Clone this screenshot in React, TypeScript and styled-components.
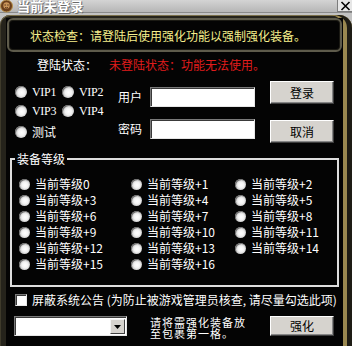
import React from "react";
import styled, { createGlobalStyle } from "styled-components";

const CJK = `"Noto Sans CJK SC", "Noto Sans", sans-serif`;

const Global = createGlobalStyle`
  html, body { margin: 0; padding: 0; background: #000; }
  body { width: 352px; height: 346px; overflow: hidden; }
  * { box-sizing: border-box; }
`;

const Window = styled.div`
  width: 352px;
  height: 346px;
  display: flex;
  flex-direction: column;
  background: #c2c2c2;
  font-family: ${CJK};
  font-size: 12px;
  overflow: hidden;
`;

const TitleBar = styled.div`
  height: 13px;
  flex: none;
  display: flex;
  align-items: flex-start;
  background: linear-gradient(#d4d4d4, #b6b6b6);
  border-bottom: 1px solid #8a8a8a;
`;

const TitleIcon = styled.svg`
  width: 14px;
  height: 13px;
  flex: none;
`;

const TitleText = styled.div`
  margin-left: 3px;
  margin-top: -1px;
  font-size: 13px;
  font-weight: bold;
  line-height: 13px;
  color: #ffffff;
  letter-spacing: 0.3px;
  text-shadow: 1px 1px 0 #6a6a6a, -1px 0 0 #9a9a9a;
`;

const CloseButton = styled.div`
  margin-left: auto;
  width: 15px;
  height: 12px;
  background: #e6e6e6;
  border: 1px solid #7c7c7c;
  border-top: none;
  border-right: none;
  display: flex;
  align-items: center;
  justify-content: center;
`;

const Frame = styled.div`
  flex: 1;
  margin-top: 2px;
  display: flex;
  flex-direction: column;
  padding: 3px 9px 0 6px;
  background: #25231b;
  border-radius: 10px 13px 0 0;
  box-shadow: inset -5px 0 0 #1e1c15, inset -9px 0 0 #9a8850,
    inset 0 1px 0 #7a6f4a, inset 1px 0 0 #3e3a2a;
`;

const Content = styled.div`
  flex: 1;
  display: flex;
  flex-direction: column;
  background: #040404;
`;

const StatusBox = styled.div`
  margin: 0 1px;
  height: 34px;
  border: 2px solid #5e5b4b;
  border-radius: 6px;
  box-shadow: inset 0 0 0 1px #1b1a14;
  display: flex;
  align-items: center;
  padding-left: 21px;
  color: #f6ef8c;
  font-size: 12px;
`;

const StatusRow = styled.div`
  margin-top: 6px;
  height: 14px;
  padding-left: 31px;
  display: flex;
  align-items: center;
  line-height: 14px;
`;

const StateLabel = styled.span`
  color: #ffffff;
  margin-right: 12px;
`;

const StateValue = styled.span`
  color: #e01c1c;
`;

const LoginArea = styled.div`
  margin-top: 8px;
  height: 64px;
  display: flex;
  align-items: flex-start;
`;

const VipGrid = styled.div`
  margin-left: 9px;
  margin-top: 5px;
  width: 103px;
  display: grid;
  grid-template-columns: 47px auto;
  grid-template-rows: 19px 21px 14px;
`;

const RadioItem = styled.label<{ $gap: number }>`
  display: flex;
  align-items: center;
  height: 14px;
  gap: ${(p) => p.$gap}px;
  color: #ffffff;
  white-space: nowrap;
  line-height: 14px;
`;

const RadioDot = styled.span<{ $size: number }>`
  width: ${(p) => p.$size}px;
  height: ${(p) => p.$size}px;
  flex: none;
  border-radius: 50%;
  background: radial-gradient(
    circle at 55% 55%,
    #ffffff 0,
    #f2f2f2 35%,
    #c8c8c8 60%,
    #7a7a7a 100%
  );
  box-shadow: inset 1px 1px 0 #6e6e6e;
`;

const SerifText = styled.span`
  font-family: "Liberation Serif", "DejaVu Serif", serif;
  font-size: 12px;
  letter-spacing: -0.3px;
`;

const Fields = styled.div`
  margin-top: 7px;
  display: grid;
  grid-template-columns: 32px 105px;
  grid-template-rows: 20px 20px;
  row-gap: 12px;
  align-items: center;
`;

const FieldLabel = styled.span`
  color: #ffffff;
  font-size: 12px;
  line-height: 14px;
`;

const TextBox = styled.div`
  height: 20px;
  background: #ffffff;
  border: 1px solid;
  border-color: #7a7a7a #e6e6e6 #e6e6e6 #7a7a7a;
  box-shadow: inset 1px 1px 0 #3a3a3a;
`;

const ButtonColumn = styled.div`
  margin-left: auto;
  margin-right: 9px;
  margin-top: 1px;
  display: flex;
  flex-direction: column;
  gap: 16px;
`;

const Button = styled.button<{ $h: number }>`
  width: 64px;
  height: ${(p) => p.$h}px;
  padding: 0;
  background: #d6d3ce;
  border: 1px solid;
  border-color: #ffffff #3c3c3c #3c3c3c #ffffff;
  box-shadow: inset -1px -1px 0 #868686;
  font-family: ${CJK};
  font-size: 12px;
  color: #000000;
  line-height: 14px;
`;

const GroupBox = styled.fieldset`
  margin: 8px 4px 0 4px;
  padding: 0;
  border: 2px solid #dedede;
  min-inline-size: 0;
`;

const Legend = styled.legend`
  margin-left: 3px;
  padding: 0 2px;
  color: #ffffff;
  font-size: 12px;
  line-height: 14px;
`;

const LevelGrid = styled.div`
  padding: 10px 0 13px 7px;
  display: grid;
  grid-template-columns: 112px 104px 1fr;
  grid-auto-rows: 16px;
  align-items: center;
`;

const CheckRow = styled.label`
  margin-top: 6px;
  margin-left: 9px;
  height: 13px;
  display: flex;
  align-items: center;
  gap: 5px;
  color: #ffffff;
  white-space: nowrap;
  line-height: 14px;
`;

const CheckBox = styled.span`
  width: 12px;
  height: 12px;
  flex: none;
  background: #ffffff;
  border: 1px solid;
  border-color: #7a7a7a #e8e8e8 #e8e8e8 #7a7a7a;
  box-shadow: inset 1px 1px 0 #3a3a3a;
`;

const BottomRow = styled.div`
  margin-top: 10px;
  margin-left: 8px;
  height: 20px;
  display: flex;
  align-items: flex-start;
`;

const Select = styled.div`
  width: 113px;
  height: 20px;
  display: flex;
  justify-content: flex-end;
  background: #ffffff;
  border: 1px solid;
  border-color: #7a7a7a #e6e6e6 #e6e6e6 #7a7a7a;
  box-shadow: inset 1px 1px 0 #3a3a3a;
  padding: 2px 1px 1px 2px;
`;

const DropButton = styled.div`
  width: 15px;
  height: 100%;
  background: #d6d3ce;
  border: 1px solid;
  border-color: #f4f4f4 #404040 #404040 #f4f4f4;
  display: flex;
  align-items: center;
  justify-content: center;
`;

const Note = styled.div`
  margin-left: 23px;
  margin-top: 1px;
  color: #ffffff;
  font-size: 11px;
  letter-spacing: 1px;
  line-height: 11px;
  white-space: nowrap;
`;

const BottomButtonWrap = styled.div`
  margin-left: auto;
  margin-right: 9px;
`;

const levels = Array.from({ length: 17 }, (_, i) =>
  i === 0 ? "当前等级0" : `当前等级+${i}`
);

export default function App() {
  return (
    <>
      <Global />
      <Window>
        <TitleBar>
          <TitleIcon viewBox="0 0 14 13">
            <circle cx="6.5" cy="6" r="6" fill="#6b3f1c" stroke="#b8924e" strokeWidth="1" />
            <circle cx="6.5" cy="5.5" r="3.2" fill="#c9955a" />
            <path d="M4.5 5 h1.3 M7.3 5 h1.3" stroke="#3a1e0a" strokeWidth="0.9" />
            <path d="M5 7.5 q1.5 1 3 0" stroke="#3a1e0a" strokeWidth="0.8" fill="none" />
          </TitleIcon>
          <TitleText>当前未登录</TitleText>
          <CloseButton>
            <svg width="11" height="10" viewBox="0 0 11 10">
              <path d="M1.5 1 L9.5 9 M9.5 1 L1.5 9" stroke="#000" strokeWidth="1.6" />
            </svg>
          </CloseButton>
        </TitleBar>
        <Frame>
          <Content>
            <StatusBox>状态检查：请登陆后使用强化功能以强制强化装备。</StatusBox>
            <StatusRow>
              <StateLabel>登陆状态：</StateLabel>
              <StateValue>未登陆状态：功能无法使用。</StateValue>
            </StatusRow>
            <LoginArea>
              <VipGrid>
                <RadioItem $gap={5}>
                  <RadioDot $size={12} />
                  <SerifText>VIP1</SerifText>
                </RadioItem>
                <RadioItem $gap={5}>
                  <RadioDot $size={12} />
                  <SerifText>VIP2</SerifText>
                </RadioItem>
                <RadioItem $gap={5}>
                  <RadioDot $size={12} />
                  <SerifText>VIP3</SerifText>
                </RadioItem>
                <RadioItem $gap={5}>
                  <RadioDot $size={12} />
                  <SerifText>VIP4</SerifText>
                </RadioItem>
                <RadioItem $gap={5}>
                  <RadioDot $size={12} />
                  <span>测试</span>
                </RadioItem>
              </VipGrid>
              <Fields>
                <FieldLabel>用户</FieldLabel>
                <TextBox />
                <FieldLabel>密码</FieldLabel>
                <TextBox />
              </Fields>
              <ButtonColumn>
                <Button $h={23}>登录</Button>
                <Button $h={23}>取消</Button>
              </ButtonColumn>
            </LoginArea>
            <GroupBox>
              <Legend>装备等级</Legend>
              <LevelGrid>
                {levels.map((t) => (
                  <RadioItem key={t} $gap={5}>
                    <RadioDot $size={11} />
                    <span>{t}</span>
                  </RadioItem>
                ))}
              </LevelGrid>
            </GroupBox>
            <CheckRow>
              <CheckBox />
              <span>屏蔽系统公告 (为防止被游戏管理员核查, 请尽量勾选此项)</span>
            </CheckRow>
            <BottomRow>
              <Select>
                <DropButton>
                  <svg width="7" height="4" viewBox="0 0 7 4">
                    <path d="M0 0 H7 L3.5 4 Z" fill="#000" />
                  </svg>
                </DropButton>
              </Select>
              <Note>
                请将需强化装备放
                <br />
                至包裹第一格。
              </Note>
              <BottomButtonWrap>
                <Button $h={20}>强化</Button>
              </BottomButtonWrap>
            </BottomRow>
          </Content>
        </Frame>
      </Window>
    </>
  );
}
